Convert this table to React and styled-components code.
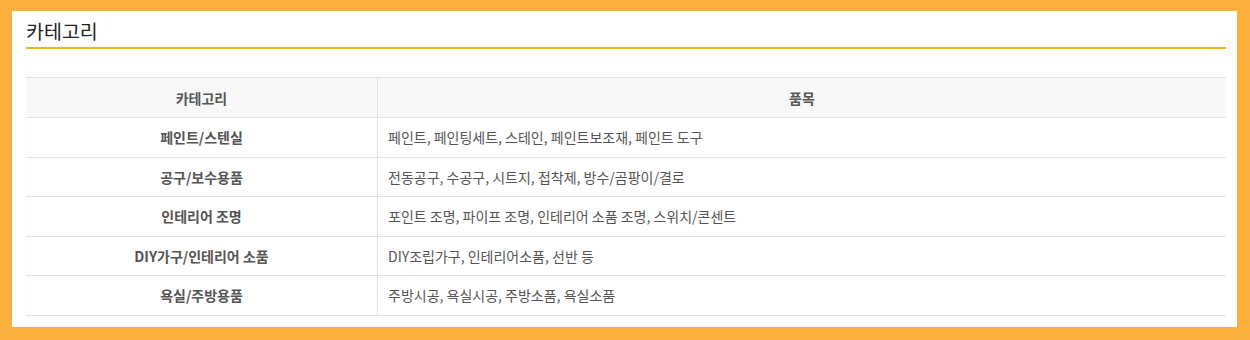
import React from "react";
import styled, { createGlobalStyle } from "styled-components";

const Global = createGlobalStyle`
  html, body { margin: 0; padding: 0; background: #fbb03b; }
  body { font-family: "Noto Sans CJK KR", "Noto Sans", sans-serif; }
`;

const Frame = styled.div`
  width: 1250px;
  height: 340px;
  box-sizing: border-box;
  padding: 11px 13px 13px 12px;
  background: #fbb03b;
`;

const Panel = styled.div`
  height: 100%;
  background: #fff;
  box-sizing: border-box;
  padding: 0 11px 0 14px;
`;

const Title = styled.h2`
  margin: 0;
  box-sizing: border-box;
  height: 38px;
  padding-top: 8px;
  font-size: 19.5px;
  line-height: 24px;
  font-weight: 400;
  color: #222;
  border-bottom: 2px solid #f5b21f;
`;

const Table = styled.table`
  margin-top: 28px;
  width: 100%;
  border-collapse: collapse;
  font-size: 14px;
  color: #555;
`;

const Th = styled.th`
  height: 39px;
  padding: 0;
  background: #f8f8f8;
  border-top: 1px solid #e2e2e2;
  border-bottom: 1px solid #e2e2e2;
  border-left: ${(p) => (p.$divider ? "1px solid #e2e2e2" : "none")};
  font-size: 14px;
  font-weight: 700;
  color: #555;
  width: ${(p) => p.$w || "auto"};
`;

const Td = styled.td`
  height: 38.5px;
  padding: 0 0 0 ${(p) => (p.$name ? "0" : "10px")};
  border-bottom: 1px solid #e2e2e2;
  border-left: ${(p) => (p.$name ? "none" : "1px solid #e2e2e2")};
  text-align: ${(p) => (p.$name ? "center" : "left")};
  font-size: 14px;
  font-weight: ${(p) => (p.$name ? 700 : 400)};
  color: #555;
`;

const rows = [
  ["페인트/스텐실", "페인트, 페인팅세트, 스테인, 페인트보조재, 페인트 도구"],
  ["공구/보수용품", "전동공구, 수공구, 시트지, 접착제, 방수/곰팡이/결로"],
  ["인테리어 조명", "포인트 조명, 파이프 조명, 인테리어 소품 조명, 스위치/콘센트"],
  ["DIY가구/인테리어 소품", "DIY조립가구, 인테리어소품, 선반 등"],
  ["욕실/주방용품", "주방시공, 욕실시공, 주방소품, 욕실소품"],
];

export default function App() {
  return (
    <>
      <Global />
      <Frame>
        <Panel>
          <Title>카테고리</Title>
          <Table>
            <thead>
              <tr>
                <Th $w="351px">카테고리</Th>
                <Th $divider>품목</Th>
              </tr>
            </thead>
            <tbody>
              {rows.map(([name, items]) => (
                <tr key={name}>
                  <Td $name>{name}</Td>
                  <Td>{items}</Td>
                </tr>
              ))}
            </tbody>
          </Table>
        </Panel>
      </Frame>
    </>
  );
}
